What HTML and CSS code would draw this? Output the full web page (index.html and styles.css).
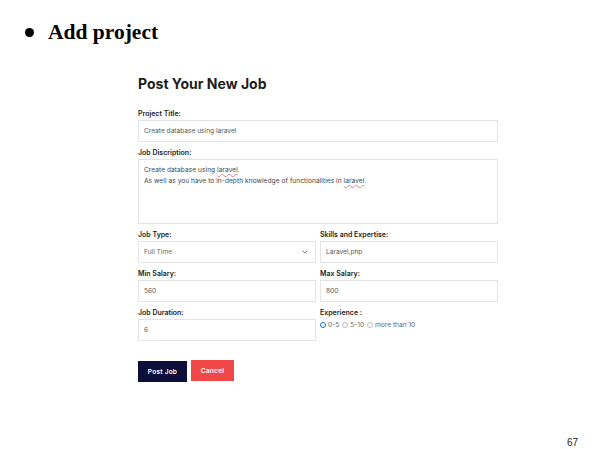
FILE: index.html
```html
<!DOCTYPE html>
<html>
<head>
<meta charset="utf-8">
<link rel="stylesheet" href="styles.css">
</head>
<body>
<div class="page">
  <h1 class="slide-title"><span class="dot"></span>Add project</h1>
  <form class="job-form">
    <h2 class="form-title">Post Your New Job</h2>
    <div class="group">
      <label class="lbl">Project Title:</label>
      <div class="field">Create database using laravel</div>
    </div>
    <div class="group">
      <label class="lbl">Job Discription:</label>
      <div class="field area">Create database using <span class="spell">laravel</span>.<br>As well as you have to in-depth knowledge of functionalities in <span class="spell">laravel</span>.</div>
    </div>
    <div class="row">
      <div class="group">
        <label class="lbl">Job Type:</label>
        <div class="field select"><span>Full Time</span>
          <svg class="chev" width="6" height="4" viewBox="0 0 6 4"><path d="M0.6 0.6 L3 3 L5.4 0.6" fill="none" stroke="#777" stroke-width="0.9"/></svg>
        </div>
      </div>
      <div class="group">
        <label class="lbl">Skills and Expertise:</label>
        <div class="field">Laravel,php</div>
      </div>
    </div>
    <div class="row">
      <div class="group">
        <label class="lbl">Min Salary:</label>
        <div class="field">560</div>
      </div>
      <div class="group">
        <label class="lbl">Max Salary:</label>
        <div class="field">800</div>
      </div>
    </div>
    <div class="row">
      <div class="group">
        <label class="lbl">Job Duration:</label>
        <div class="field">6</div>
      </div>
      <div class="group">
        <label class="lbl">Experience :</label>
        <div class="radios">
          <span class="radio checked"></span><span class="rtext">0-5</span>
          <span class="radio"></span><span class="rtext">5-10</span>
          <span class="radio"></span><span class="rtext">more than 10</span>
        </div>
      </div>
    </div>
    <div class="buttons">
      <button type="button" class="btn post">Post Job</button>
      <button type="button" class="btn cancel">Cancel</button>
    </div>
  </form>
  <div class="page-num">67</div>
</div>
</body>
</html>
```
FILE: styles.css
```css
html, body {
  margin: 0;
  padding: 0;
  background: #fff;
}
.page {
  width: 610px;
  height: 449px;
  position: relative;
  font-family: "Inter", "Noto Sans", sans-serif;
}
.slide-title {
  margin: 0;
  padding: 19px 0 0 25px;
  display: flex;
  align-items: center;
  font-family: "Liberation Serif", serif;
  font-weight: bold;
  font-size: 21.5px;
  line-height: 26px;
  color: #000;
}
.dot {
  width: 9px;
  height: 9px;
  border-radius: 50%;
  background: #000;
  margin-right: 14px;
  margin-top: 1px;
}
.job-form {
  margin: 0 0 0 138px;
  width: 360px;
  display: flex;
  flex-direction: column;
  gap: 6px;
}
.form-title {
  margin: 30px 0 10px 0;
  font-size: 14px;
  line-height: 18px;
  font-weight: 700;
  color: #1d1d1d;
  letter-spacing: 0;
}
.group {
  display: flex;
  flex-direction: column;
  gap: 1px;
}
.lbl {
  font-size: 7px;
  line-height: 10px;
  font-weight: 600;
  color: #222;
}
.field {
  box-sizing: border-box;
  height: 22px;
  border: 1px solid #e4e4e4;
  background: #fff;
  padding: 0 5px;
  display: flex;
  align-items: center;
  font-size: 6.6px;
  color: #555;
}
.field.area {
  height: 65px;
  display: block;
  padding-top: 5px;
  line-height: 11px;
  color: #444;
  letter-spacing: 0.05px;
}
.spell {
  text-decoration: underline wavy #e88080;
  text-decoration-thickness: 0.4px;
  text-underline-offset: 1px;
}
.select {
  justify-content: space-between;
  color: #666;
}
.chev {
  margin-right: 2px;
}
.row {
  display: grid;
  grid-template-columns: 178px 178px;
  column-gap: 4px;
}
.radios {
  display: flex;
  align-items: center;
  height: 12px;
  font-size: 6.6px;
  color: #666;
}
.radio {
  box-sizing: border-box;
  width: 6px;
  height: 6px;
  border-radius: 50%;
  border: 0.8px solid #bbb;
  margin-right: 2px;
}
.radio.checked {
  border: 1.6px solid #1a6fe0;
  background: #fff;
}
.rtext {
  margin-right: 3px;
}
.buttons {
  display: flex;
  align-items: flex-start;
  gap: 4px;
  margin-top: 13px;
}
.btn {
  border: none;
  font-family: "Inter", "Noto Sans", sans-serif;
  font-size: 6.6px;
  font-weight: 600;
  color: #fff;
  padding: 0;
  letter-spacing: 0.2px;
}
.post {
  width: 49px;
  height: 21px;
  margin-top: 1px;
  background: #0e0e3a;
}
.cancel {
  width: 43px;
  height: 21px;
  background: #f04848;
}
.page-num {
  position: absolute;
  right: 32px;
  top: 437px;
  font-family: "Liberation Sans", sans-serif;
  font-size: 10px;
  color: #222;
}
```
